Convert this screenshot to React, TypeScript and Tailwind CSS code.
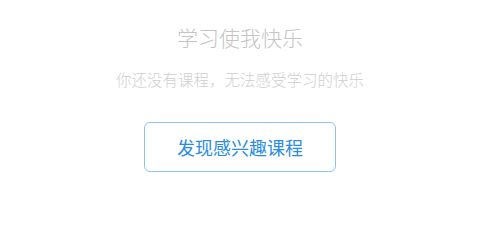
import React from "react";

export default function App() {
  return (
    <div
      className="w-[480px] h-[232px] bg-white flex flex-col items-center"
      style={{ fontFamily: '"Noto Sans CJK SC", "Noto Sans", sans-serif' }}
    >
      <div className="mt-[23px] text-[21px] leading-[28px] font-light text-[#c4c4c4]">学习使我快乐</div>
      <div className="mt-[18px] text-[15.5px] leading-[20px] font-light text-[#cfcfcf]">你还没有课程，无法感受学习的快乐</div>
      <button className="mt-[33px] w-[192px] h-[50px] rounded-[6px] border border-[#88c4ee] text-[18px] text-[#2a8de0] bg-white">
        发现感兴趣课程
      </button>
    </div>
  );
}
